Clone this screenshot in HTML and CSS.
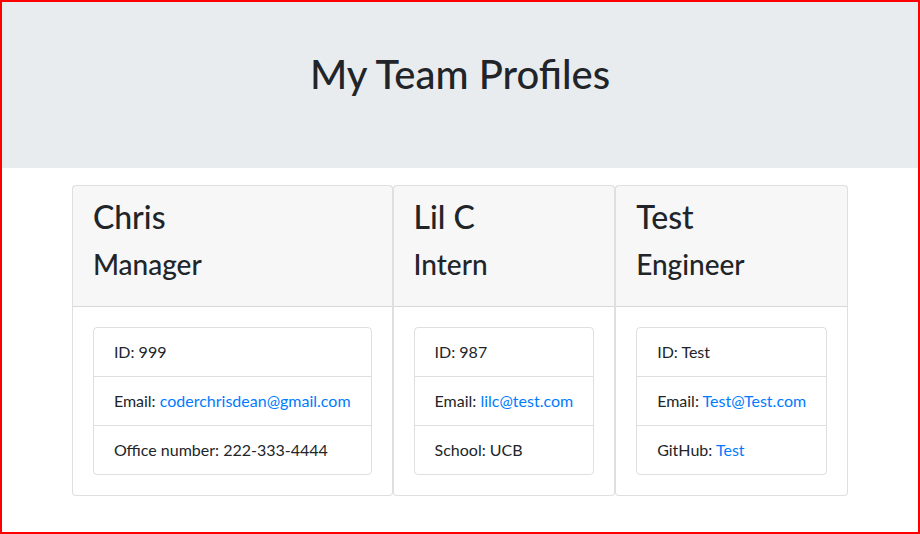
FILE: index.html
```html
<!DOCTYPE html>
<html lang="en">
<head>
<meta charset="utf-8">
<title>My Team Profiles</title>
<link rel="stylesheet" href="styles.css">
</head>
<body>
<header class="jumbotron">
  <h1 class="page-title">My Team Profiles</h1>
</header>
<main class="team">
  <section class="card">
    <div class="card-header">
      <h2 class="card-name">Chris</h2>
      <h3 class="card-role">Manager</h3>
    </div>
    <div class="card-body">
      <ul class="list-group">
        <li class="list-item">ID: 999</li>
        <li class="list-item">Email: <a class="link" href="#">coderchrisdean@gmail.com</a></li>
        <li class="list-item">Office number: 222-333-4444</li>
      </ul>
    </div>
  </section>
  <section class="card">
    <div class="card-header">
      <h2 class="card-name">Lil C</h2>
      <h3 class="card-role">Intern</h3>
    </div>
    <div class="card-body">
      <ul class="list-group">
        <li class="list-item">ID: 987</li>
        <li class="list-item">Email: <a class="link" href="#">lilc@test.com</a></li>
        <li class="list-item">School: UCB</li>
      </ul>
    </div>
  </section>
  <section class="card">
    <div class="card-header">
      <h2 class="card-name">Test</h2>
      <h3 class="card-role">Engineer</h3>
    </div>
    <div class="card-body">
      <ul class="list-group">
        <li class="list-item">ID: Test</li>
        <li class="list-item">Email: <a class="link" href="#">Test@Test.com</a></li>
        <li class="list-item">GitHub: <a class="link" href="#">Test</a></li>
      </ul>
    </div>
  </section>
</main>
</body>
</html>
```
FILE: styles.css
```css
* { box-sizing: border-box; }
html, body { height: 100%; }
body {
  margin: 0;
  border: 2px solid #ff0000;
  font-family: "Lato", "Noto Sans", sans-serif;
  font-size: 16px;
  line-height: 1.5;
  color: #212529;
  background: #fff;
}
.jumbotron {
  background: #e9ecef;
  padding: 48px 0 70px;
  text-align: center;
}
.page-title {
  margin: 0;
  font-size: 40px;
  font-weight: 500;
  line-height: 1.2;
}
.team {
  display: flex;
  justify-content: center;
  padding-top: 17px;
}
.card {
  display: flex;
  flex-direction: column;
  background: #fff;
  border: 1px solid rgba(0,0,0,.125);
  border-radius: 4px;
}
.card-header {
  background: rgba(0,0,0,.03);
  padding: 12px 20px;
  border-bottom: 1px solid rgba(0,0,0,.125);
}
.card-name {
  margin: 0 0 12px;
  font-size: 32px;
  font-weight: 500;
  line-height: 1.2;
}
.card-role {
  margin: 0 0 12px;
  font-size: 28px;
  font-weight: 500;
  line-height: 1.2;
}
.card-body {
  flex: 1 1 auto;
  padding: 20px;
}
.list-group {
  list-style: none;
  margin: 0;
  padding: 0;
  border: 1px solid rgba(0,0,0,.125);
  border-radius: 4px;
}
.list-item {
  padding: 12px 20px;
  white-space: nowrap;
}
.list-item + .list-item {
  border-top: 1px solid rgba(0,0,0,.125);
}
.link {
  color: #007bff;
  text-decoration: none;
}
```
